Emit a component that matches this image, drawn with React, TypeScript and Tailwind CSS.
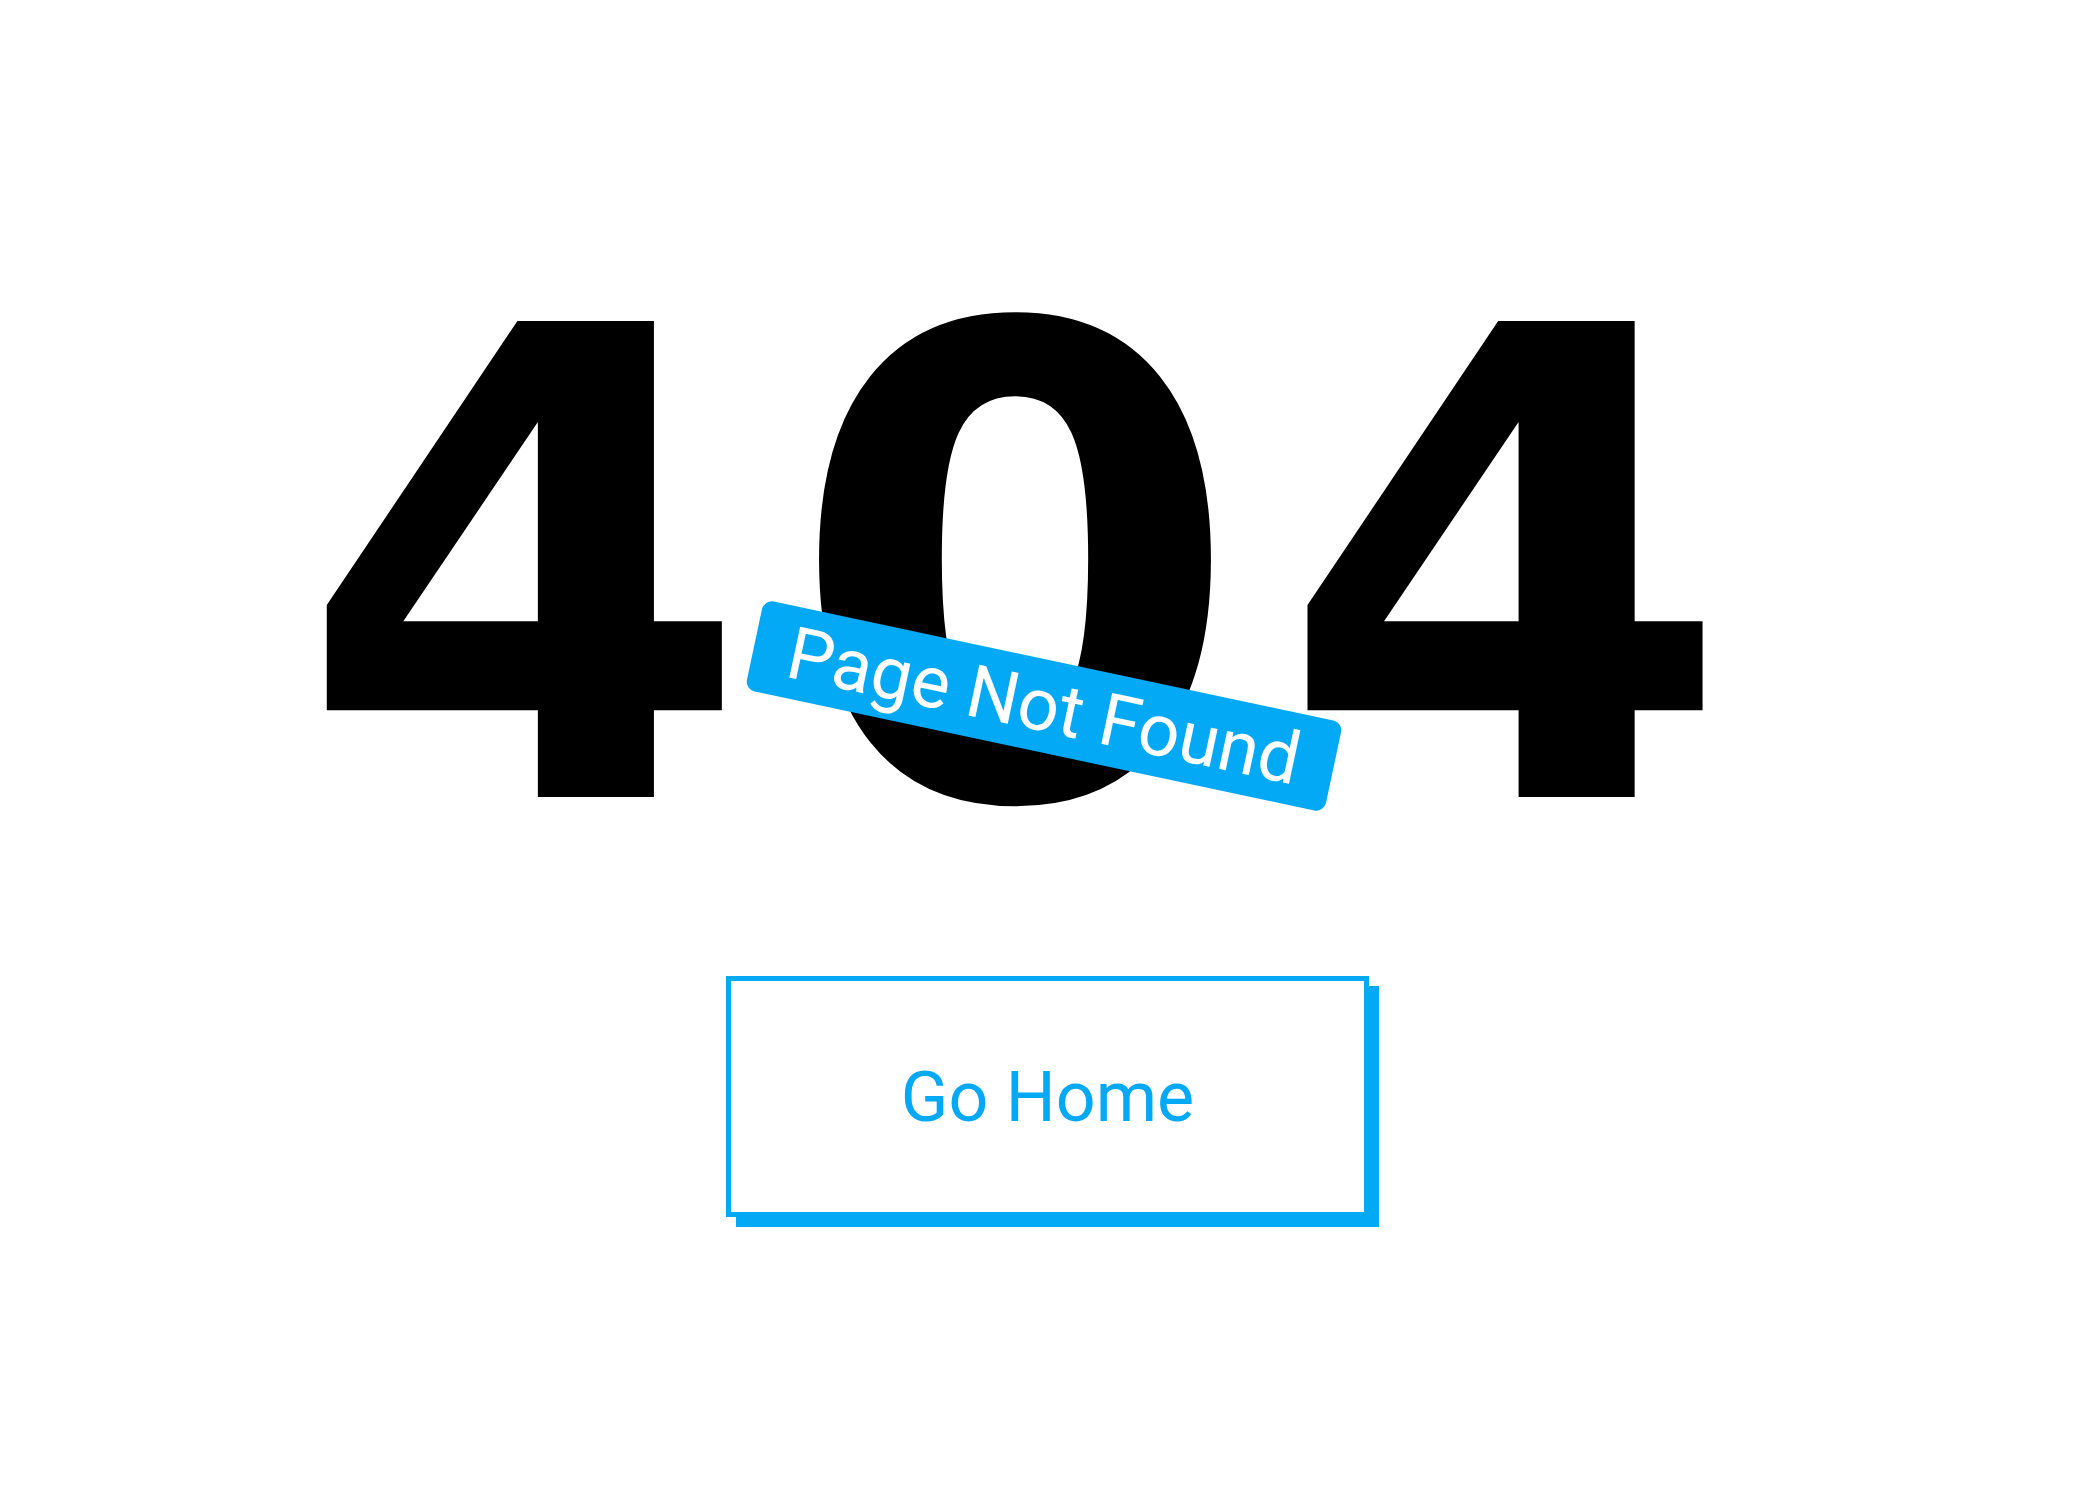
import React from "react";

export default function App() {
  return (
    <div className="min-h-screen w-full bg-white flex flex-col items-center pt-[245px]">
      <div className="relative w-full flex justify-center">
        <h1
          className="text-[653px] leading-none font-bold tracking-[36px] text-black pr-[34px] select-none"
          style={{ fontFamily: '"DejaVu Sans", Verdana, sans-serif' }}
        >
          404
        </h1>
        <div className="absolute left-[calc(50%-6px)] top-[461px] -translate-x-1/2 -translate-y-1/2 rotate-12 w-[592px] h-[92px] rounded-[10px] bg-[#03a9f4] flex items-center justify-center">
          <span
            className="text-[73px] leading-none text-white whitespace-nowrap tracking-normal font-normal"
            style={{ fontFamily: 'Roboto, "Noto Sans", sans-serif' }}
          >
            Page Not Found
          </span>
        </div>
      </div>
      <button className="mt-[78px] -ml-[5px] w-[643px] h-[241px] border-[5px] border-[#03a9f4] bg-white shadow-[10px_10px_0_0_#03a9f4] flex items-center justify-center">
        <span
          className="text-[70px] leading-none text-[#03a9f4]"
          style={{ fontFamily: 'Roboto, "Noto Sans", sans-serif' }}
        >
          Go Home
        </span>
      </button>
    </div>
  );
}
